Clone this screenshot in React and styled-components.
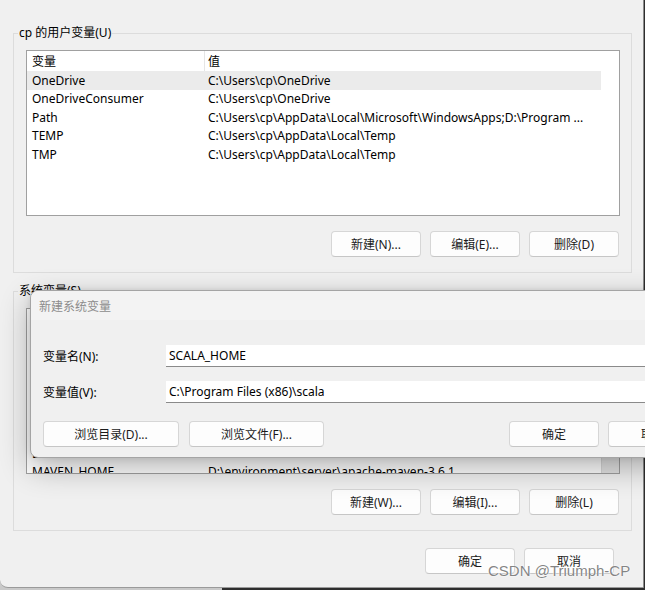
import React from 'react'
import styled, { createGlobalStyle } from 'styled-components'

const GlobalStyle = createGlobalStyle`
    html, body {
        margin: 0;
        padding: 0;
    }

    body {
        width: 645px;
        height: 590px;
        overflow: hidden;
        font-family: "Noto Sans", "Noto Sans CJK SC", sans-serif;
        font-size: 12px;
        color: #000;
    }
`

const Desktop = styled.div`
    position: relative;
    width: 645px;
    height: 590px;
    overflow: hidden;
    background: linear-gradient(to right, #c9c9c9 0 222px, #2e2e2e 222px);
`

const Window = styled.div`
    width: 644px;
    height: 588px;
    box-sizing: border-box;
    background: #f0f0f0;
    border-right: 1px solid #8b8b8b;
    border-bottom: 1px solid #9a9a9a;
    border-bottom-left-radius: 8px;
    padding: 25px 0 0 13px;
    display: flex;
    flex-direction: column;
`

const GroupBox = styled.fieldset`
    width: 619px;
    box-sizing: border-box;
    margin: 0 0 ${p => p.$gap}px 0;
    padding: 0;
    border: 1px solid #dcdcdc;
    min-inline-size: auto;
`

const Legend = styled.legend`
    margin-left: 4px;
    padding: 0 1px;
    line-height: 16px;
    font-size: 12px;
    color: #000;
`

const GroupBody = styled.div`
    padding: 9px 11px 15px 12px;
`

const ListView = styled.div`
    height: 166px;
    box-sizing: border-box;
    border: 1px solid #a0a0a0;
    background: #fff;
    display: flex;
    overflow: hidden;
`

const Columns = styled.div`
    width: 574px;
    flex: none;
    display: flex;
    flex-direction: column;
`

const HeaderRow = styled.div`
    display: grid;
    grid-template-columns: 178px 1fr;
    height: 20px;
    flex: none;
    margin-bottom: ${p => p.$scrolled || 0}px;
`

const HeaderCell = styled.div`
    display: flex;
    align-items: center;
    box-sizing: border-box;
    padding-left: ${p => (p.$first ? 5 : 3)}px;
    border-right: ${p => (p.$first ? '1px solid #e5e5e5' : 'none')};
`

const Row = styled.div`
    display: grid;
    grid-template-columns: 178px 1fr;
    height: 18.5px;
    flex: none;
    align-items: center;
    background: ${p => (p.$selected ? '#ebebeb' : 'transparent')};
`

const Cell = styled.div`
    padding-left: ${p => (p.$first ? 5 : 3)}px;
    white-space: nowrap;
    overflow: hidden;
`

const ScrollTrack = styled.div`
    flex: 1;
    background: ${p => (p.$visible ? '#e4e4e4' : '#fff')};
    border-left: ${p => (p.$visible ? '1px solid #d8d8d8' : 'none')};
`

const ButtonRow = styled.div`
    display: flex;
    justify-content: flex-end;
    gap: ${p => p.$gap || 9}px;
    margin-top: ${p => p.$top || 0}px;
    padding-right: ${p => p.$right || 0}px;
`

const Button = styled.button`
    width: ${p => p.$w || 90}px;
    height: 26px;
    box-sizing: border-box;
    padding: 0;
    background: #fdfdfd;
    border: 1px solid #d6d6d6;
    border-bottom-color: #c6c6c6;
    border-radius: 4px;
    font: 12px "Noto Sans", "Noto Sans CJK SC", sans-serif;
    color: #1b1b1b;
    flex: none;
`

const Dialog = styled.div`
    position: absolute;
    left: 30px;
    top: 290px;
    width: 681px;
    height: 168px;
    box-sizing: border-box;
    border: 1px solid #a4a4a4;
    border-radius: 8px;
    background: #f0f0f0;
    overflow: hidden;
    box-shadow: 0 10px 30px rgba(0, 0, 0, 0.3), 0 0 6px rgba(0, 0, 0, 0.1);
    display: flex;
    flex-direction: column;
`

const TitleBar = styled.div`
    height: 29px;
    flex: none;
    display: flex;
    align-items: center;
    padding-left: 8px;
    background: #f3f3f3;
    color: #8c8c8c;
    font-size: 12px;
`

const DialogBody = styled.div`
    padding: 25px 12px 11px 12px;
    display: flex;
    flex-direction: column;
`

const FieldRow = styled.div`
    display: flex;
    align-items: center;
    height: 22px;
    margin-bottom: ${p => p.$gap || 0}px;
`

const FieldLabel = styled.label`
    width: 123px;
    flex: none;
`

const TextInput = styled.input`
    flex: 1;
    height: 22px;
    box-sizing: border-box;
    border: none;
    border-bottom: 1px solid #8a8a8a;
    background: #fff;
    padding: 0 0 0 3px;
    font: 12px "Noto Sans", "Noto Sans CJK SC", sans-serif;
    color: #000;
    outline: none;
`

const DialogButtons = styled.div`
    display: flex;
    gap: 10px;
    margin-top: 18px;
`

const PushRight = styled.div`
    margin-left: auto;
    display: flex;
    gap: 9px;
`

const Watermark = styled.div`
    position: absolute;
    left: 488px;
    top: 562px;
    font: 15px "Liberation Sans", Arial, sans-serif;
    line-height: 17px;
    color: rgba(110, 110, 110, 0.85);
    text-shadow: 0 0 2px #fff, 0 0 1px #fff;
    white-space: nowrap;
`

const userVars = [
    ['OneDrive', 'C:\\Users\\cp\\OneDrive'],
    ['OneDriveConsumer', 'C:\\Users\\cp\\OneDrive'],
    ['Path', 'C:\\Users\\cp\\AppData\\Local\\Microsoft\\WindowsApps;D:\\Program ...'],
    ['TEMP', 'C:\\Users\\cp\\AppData\\Local\\Temp'],
    ['TMP', 'C:\\Users\\cp\\AppData\\Local\\Temp'],
]

const systemVars = [
    ['CLASSPATH', '.;%JAVA_HOME%\\lib'],
    ['ComSpec', 'C:\\Windows\\system32\\cmd.exe'],
    ['DriverData', 'C:\\Windows\\System32\\Drivers\\DriverData'],
    ['GRADLE_HOME', 'D:\\environment\\server\\gradle'],
    ['HADOOP_HOME', 'D:\\environment\\server\\hadoop'],
    ['JAVA_HOME', 'D:\\environment\\jdk1.8'],
    ['LIBS', 'D:\\environment\\lib'],
    ['MAVEN_HOME', 'D:\\environment\\server\\apache-maven-3.6.1'],
    ['NUMBER_OF_PROCESSORS', '16'],
    ['OS', 'Windows_NT'],
]

// scrolled: the system list sits a few pixels past a whole row
const VarList = ({ rows, selected, scroll, scrolled }) => (
    <ListView>
        <Columns>
            <HeaderRow $scrolled={scrolled}>
                <HeaderCell $first>变量</HeaderCell>
                <HeaderCell>值</HeaderCell>
            </HeaderRow>
            {rows.map(([name, value], i) => (
                <Row key={name} $selected={i === selected}>
                    <Cell $first>{name}</Cell>
                    <Cell>{value}</Cell>
                </Row>
            ))}
        </Columns>
        <ScrollTrack $visible={scroll} />
    </ListView>
)

const App = () => {
    return (
        <Desktop>
            <GlobalStyle />
            <Window>
                <GroupBox $gap={10}>
                    <Legend>cp 的用户变量(U)</Legend>
                    <GroupBody>
                        <VarList rows={userVars} selected={0} />
                        <ButtonRow $top={15} $right={1}>
                            <Button>新建(N)...</Button>
                            <Button>编辑(E)...</Button>
                            <Button>删除(D)</Button>
                        </ButtonRow>
                    </GroupBody>
                </GroupBox>

                <GroupBox $gap={17}>
                    <Legend>系统变量(S)</Legend>
                    <GroupBody>
                        <VarList rows={systemVars} selected={-1} scroll scrolled={4} />
                        <ButtonRow $top={15} $right={1}>
                            <Button>新建(W)...</Button>
                            <Button>编辑(I)...</Button>
                            <Button>删除(L)</Button>
                        </ButtonRow>
                    </GroupBody>
                </GroupBox>

                <ButtonRow $right={29}>
                    <Button>确定</Button>
                    <Button>取消</Button>
                </ButtonRow>
            </Window>

            <Dialog>
                <TitleBar>新建系统变量</TitleBar>
                <DialogBody>
                    <FieldRow $gap={14}>
                        <FieldLabel>变量名(N):</FieldLabel>
                        <TextInput defaultValue="SCALA_HOME" />
                    </FieldRow>
                    <FieldRow>
                        <FieldLabel>变量值(V):</FieldLabel>
                        <TextInput defaultValue="C:\Program Files (x86)\scala" />
                    </FieldRow>
                    <DialogButtons>
                        <Button $w={136}>浏览目录(D)...</Button>
                        <Button $w={135}>浏览文件(F)...</Button>
                        <PushRight>
                            <Button>确定</Button>
                            <Button>取消</Button>
                        </PushRight>
                    </DialogButtons>
                </DialogBody>
            </Dialog>

            <Watermark>CSDN @Triumph-CP</Watermark>
        </Desktop>
    )
}

export default App
